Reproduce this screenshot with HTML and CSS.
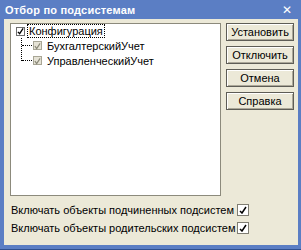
FILE: index.html
```html
<!DOCTYPE html>
<html>
<head>
<meta charset="utf-8">
<link rel="stylesheet" href="styles.css">
</head>
<body>
<div class="window">
  <div class="titlebar">
    <span class="title">Отбор по подсистемам</span>
    <span class="close">✕</span>
  </div>
  <div class="body">
    <div class="main">
      <div class="tree">
        <div class="node root">
          <span class="cb cb-root"><svg width="8" height="8" viewBox="0 0 8 8"><path d="M1 5 L3 7 L7 1" stroke="#000" stroke-width="1.5" fill="none"/></svg></span>
          <span class="label focus">Конфигурация</span>
        </div>
        <div class="children">
          <div class="node child">
            <span class="hline"></span>
            <span class="cb cb-child"><svg width="8" height="8" viewBox="0 0 8 8"><path d="M1 4 L3 7 L7 1" stroke="#8a8878" stroke-width="1.3" fill="none"/></svg></span>
            <span class="label">БухгалтерскийУчет</span>
          </div>
          <div class="node child">
            <span class="hline"></span>
            <span class="cb cb-child"><svg width="8" height="8" viewBox="0 0 8 8"><path d="M1 4 L3 7 L7 1" stroke="#8a8878" stroke-width="1.3" fill="none"/></svg></span>
            <span class="label">УправленческийУчет</span>
          </div>
        </div>
      </div>
      <div class="buttons">
        <button class="btn">Установить</button>
        <button class="btn">Отключить</button>
        <button class="btn">Отмена</button>
        <button class="btn">Справка</button>
      </div>
    </div>
    <div class="options">
      <div class="opt">
        <span class="opt-label">Включать объекты подчиненных подсистем</span>
        <span class="box"><svg width="8" height="8" viewBox="0 0 8 8"><path d="M1 5 L3 7 L7 1" stroke="#000" stroke-width="1.5" fill="none"/></svg></span>
      </div>
      <div class="opt">
        <span class="opt-label">Включать объекты родительских подсистем</span>
        <span class="box"><svg width="8" height="8" viewBox="0 0 8 8"><path d="M1 5 L3 7 L7 1" stroke="#000" stroke-width="1.5" fill="none"/></svg></span>
      </div>
    </div>
  </div>
</div>
</body>
</html>
```

FILE: styles.css
```css
html, body {
  margin: 0;
  padding: 0;
  width: 301px;
  height: 250px;
  overflow: hidden;
  background: #ece9d8;
}
.window {
  width: 301px;
  height: 250px;
  box-sizing: border-box;
  background: #5b7ec4;
  padding: 0 3px 4px 4px;
  display: flex;
  flex-direction: column;
  border-bottom: 1px solid #2f4f8f;
}
.titlebar {
  height: 19px;
  display: flex;
  align-items: center;
  justify-content: space-between;
  color: #fff;
  font-family: "Liberation Sans", Arial, sans-serif;
  font-size: 11px;
  font-weight: bold;
  padding: 0 6px 0 1px;
}
.title {
  letter-spacing: 0.2px;
}
.close {
  font-family: "DejaVu Sans", sans-serif;
  font-size: 12px;
  font-weight: bold;
}
.body {
  flex: 1;
  background: #ece9d8;
  padding: 4px 4px 0 6px;
  font-family: "Liberation Sans", Arial, sans-serif;
  font-size: 11px;
  color: #000;
  display: flex;
  flex-direction: column;
}
.main {
  display: flex;
  gap: 5px;
}
.tree {
  width: 211px;
  height: 173px;
  box-sizing: border-box;
  background: #fff;
  border: 1px solid #8c8a7c;
  padding: 0 0 0 5px;
}
.node {
  display: flex;
  align-items: center;
  height: 14px;
}
.cb {
  display: inline-flex;
  align-items: center;
  justify-content: center;
  width: 9px;
  height: 9px;
  box-sizing: border-box;
}
.cb-root {
  border: 1px solid #6e6e6e;
  background: #fff;
  margin-right: 3px;
}
.cb-child {
  border: 1px solid #a8a696;
  background: #e6e3d6;
  margin-right: 4px;
}
.label {
  padding: 0 1px;
  line-height: 12px;
}
.focus {
  outline: 1px dotted #000;
}
.children {
  margin-left: 5px;
  border-left: 1px dotted #000;
  height: 23px;
}
.child {
  height: 15px;
}
.hline {
  width: 10px;
  border-top: 1px dotted #000;
  margin-right: 1px;
}
.buttons {
  display: flex;
  flex-direction: column;
  gap: 5px;
}
.btn {
  width: 68px;
  height: 18px;
  padding: 0;
  font-family: "Liberation Sans", Arial, sans-serif;
  font-size: 11px;
  background: #ece9d8;
  border: 1px solid #5e5d56;
  box-shadow: inset 1px 1px #fff, inset -1px -1px #aca899;
  color: #000;
}
.options {
  display: flex;
  flex-direction: column;
  gap: 6px;
  margin-top: 8px;
  margin-left: 1px;
}
.opt {
  display: flex;
  align-items: center;
  height: 12px;
}
.opt-label {
  width: 226px;
}
.box {
  width: 12px;
  height: 12px;
  box-sizing: border-box;
  border: 1px solid #7f7d72;
  background: #fff;
  display: inline-flex;
  align-items: center;
  justify-content: center;
}
```
